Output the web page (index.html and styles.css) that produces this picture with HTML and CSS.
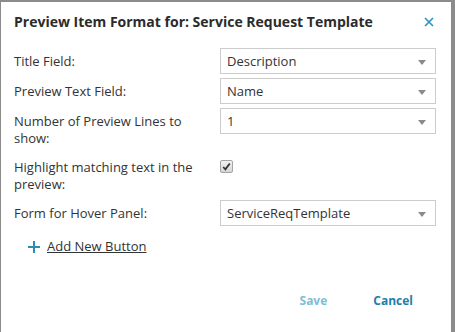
FILE: index.html
```html
<!DOCTYPE html>
<html>
    <head>
        <link rel="stylesheet" href="styles.css">
        <title>Preview Item Format</title>
    </head>
    <body>
        <div class="dialog">
            <div class="header">
                <h1 class="title">Preview Item Format for: Service Request Template</h1>
                <span class="close">
                    <svg width="10" height="10" viewBox="0 0 10 10">
                        <path d="M1 1 L9 9 M9 1 L1 9" stroke="#2a93bd" stroke-width="1.6" fill="none"/>
                    </svg>
                </span>
            </div>

            <div class="form">
                <div class="label">Title Field:</div>
                <div class="field"><div class="select">Description<span class="arrow"></span></div></div>

                <div class="label">Preview Text Field:</div>
                <div class="field"><div class="select">Name<span class="arrow"></span></div></div>

                <div class="label">Number of Preview Lines to show:</div>
                <div class="field"><div class="select">1<span class="arrow"></span></div></div>

                <div class="label">Highlight matching text in the preview:</div>
                <div class="field">
                    <span class="checkbox">
                        <svg width="9" height="9" viewBox="0 0 9 9">
                            <path d="M1.2 5 L3.4 7.3 L7.8 1.5" stroke="#333" stroke-width="1.8" fill="none"/>
                        </svg>
                    </span>
                </div>

                <div class="label">Form for Hover Panel:</div>
                <div class="field"><div class="select">ServiceReqTemplate<span class="arrow"></span></div></div>
            </div>

            <a class="add-button" href="#">
                <svg width="12" height="12" viewBox="0 0 12 12">
                    <path d="M6 0 V12 M0 6 H12" stroke="#2a8cb8" stroke-width="2" fill="none"/>
                </svg>
                <span class="add-text">Add New Button</span>
            </a>

            <div class="footer">
                <button class="btn save">Save</button>
                <button class="btn cancel">Cancel</button>
            </div>
        </div>
    </body>
</html>
```

FILE: styles.css
```css
body {
    margin: 0;
    background: #8b8b8b;
    font-family: 'Open Sans', 'Liberation Sans', sans-serif;
    color: #333;
    height: 332px;
    overflow: hidden;
}
.dialog {
    background: white;
    width: 450px;
    height: 340px;
    margin: 2px 0 0 1px;
    box-sizing: border-box;
    padding: 10px 16px 0 13px;
}
.header {
    display: flex;
    justify-content: space-between;
    align-items: flex-start;
}
.title {
    margin: 0;
    font-size: 14px;
    line-height: 20px;
    font-weight: bold;
    color: #2b2b2b;
}
.close {
    margin: 5px 1px 0 0;
    line-height: 0;
}
.form {
    display: grid;
    grid-template-columns: 206px 216px;
    row-gap: 4px;
    margin-top: 16px;
}
.label {
    font-size: 13px;
    line-height: 17px;
    padding: 5px 16px 3px 0;
}
.select {
    position: relative;
    height: 24px;
    border: 1px solid #cccccc;
    font-size: 13px;
    line-height: 24px;
    padding-left: 6px;
}
.arrow {
    position: absolute;
    right: 9px;
    top: 11px;
    width: 0;
    height: 0;
    border-left: 4px solid transparent;
    border-right: 4px solid transparent;
    border-top: 5px solid #8a8a8a;
}
.checkbox {
    display: flex;
    align-items: center;
    justify-content: center;
    width: 11px;
    height: 11px;
    margin-top: 6px;
    border: 1px solid #a5a5a5;
    border-radius: 2px;
    background: linear-gradient(#f2f2f2, #d6d6d6);
}
.add-button {
    display: flex;
    align-items: center;
    gap: 7px;
    margin: 12px 0 0 14px;
    color: #333;
    font-size: 13px;
    line-height: 17px;
    text-decoration: none;
}
.add-text {
    text-decoration: underline;
}
.footer {
    display: flex;
    justify-content: flex-end;
    gap: 46px;
    margin-top: 37px;
    padding-right: 22px;
}
.btn {
    border: none;
    background: none;
    padding: 0;
    font-family: 'Open Sans', 'Liberation Sans', sans-serif;
    font-size: 12px;
    font-weight: bold;
    line-height: 17px;
}
.save {
    color: #7fbdd6;
}
.cancel {
    color: #1f7ea6;
}
```
